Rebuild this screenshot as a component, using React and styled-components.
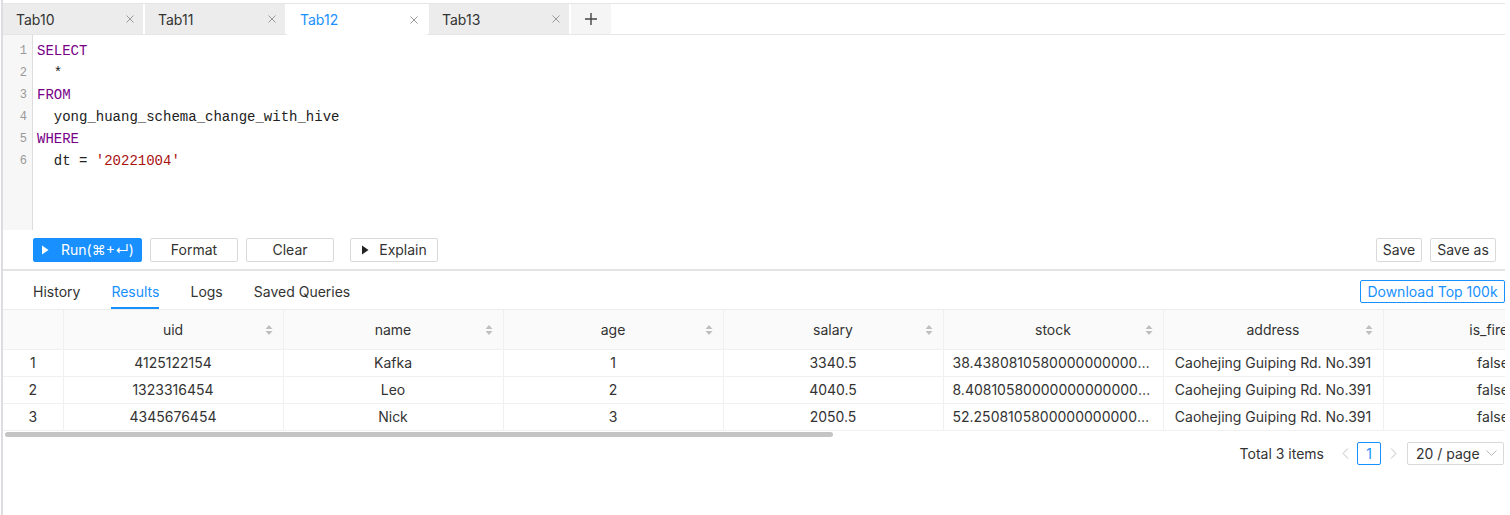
import React from "react";
import styled, { createGlobalStyle } from "styled-components";

const Global = createGlobalStyle`
  html, body { margin: 0; padding: 0; background: #fff; }
  body { font-family: Inter, "Noto Sans", sans-serif; font-size: 14px; color: #333; }
  * { box-sizing: border-box; }
`;

const Page = styled.div`
  width: 1510px;
  height: 515px;
  padding-left: 1px;
  overflow: hidden;
  display: flex;
`;

const Shell = styled.div`
  flex: 0 0 1504px;
  border-left: 2px solid #dcdce3;
  display: flex;
  flex-direction: column;
  padding-top: 3px;
`;

const TabBar = styled.div`
  height: 32px;
  display: flex;
  gap: 2px;
  border-top: 1px solid #e6e6e6;
  border-bottom: 1px solid #e6e6e6;
  width: 1502px;
`;

const Tab = styled.div`
  width: 140px;
  display: flex;
  align-items: center;
  justify-content: space-between;
  padding: 0 9px 0 13px;
  background: ${(p) => (p.$active ? "#fff" : "#ececec")};
  color: ${(p) => (p.$active ? "#1890ff" : "#333")};
  font-size: 14px;
  margin-bottom: ${(p) => (p.$active ? "-1px" : "0")};
`;

const AddTab = styled.div`
  width: 40px;
  display: flex;
  align-items: center;
  justify-content: center;
  background: #f5f5f5;
  color: #444;
`;

const Editor = styled.div`
  height: 195px;
  display: flex;
  width: 1502px;
`;

const Gutter = styled.div`
  width: 30px;
  background: #f7f7f7;
  border-right: 1px solid #ddd;
  padding-top: 5px;
  display: flex;
  flex-direction: column;
`;

const LineNo = styled.div`
  height: 22px;
  line-height: 22px;
  text-align: right;
  padding-right: 5px;
  font-family: "Liberation Mono", monospace;
  font-size: 12px;
  color: #999;
`;

const Code = styled.div`
  padding: 5px 0 0 4px;
  font-family: "Liberation Mono", "DejaVu Sans Mono", monospace;
  font-size: 14px;
`;

const CodeLine = styled.div`
  height: 22px;
  line-height: 22px;
  white-space: pre;
  color: #222;
`;

const Kw = styled.span`
  color: #770088;
`;

const Str = styled.span`
  color: #aa1111;
`;

const Toolbar = styled.div`
  height: 41px;
  display: flex;
  align-items: center;
  padding: 0 9px 0 30px;
  width: 1502px;
  border-bottom: 2px solid #e4e4e4;
`;

const Btn = styled.button`
  height: 24px;
  width: ${(p) => p.$w}px;
  margin-left: ${(p) => p.$ml || 0}px;
  display: inline-flex;
  align-items: center;
  justify-content: center;
  gap: ${(p) => (p.$primary ? 12 : 10)}px;
  border: 1px solid ${(p) => (p.$primary ? "#1890ff" : "#d9d9d9")};
  background: ${(p) => (p.$primary ? "#1890ff" : "#fff")};
  color: ${(p) => (p.$primary ? "#fff" : "#333")};
  border-radius: 2px;
  font-family: Inter, sans-serif;
  font-size: 14px;
  padding: 0;
  cursor: pointer;
`;

const Spacer = styled.div`
  flex: 1;
`;

const ResultTabs = styled.div`
  height: 39px;
  display: flex;
  align-items: stretch;
  padding: 0 0 0 30px;
  gap: 31px;
  border-bottom: 1px solid #ececec;
  width: 1502px;
`;

const RTab = styled.div`
  display: flex;
  align-items: center;
  padding-top: 5px;
  font-size: 14px;
  color: ${(p) => (p.$active ? "#1890ff" : "#333")};
  border-bottom: 2px solid ${(p) => (p.$active ? "#1890ff" : "transparent")};
`;

const DownloadBtn = styled.button`
  align-self: center;
  margin-top: 3px;
  margin-left: auto;
  height: 23px;
  width: 145px;
  border: 1px solid #1890ff;
  background: #fff;
  color: #1890ff;
  border-radius: 2px;
  font-family: Inter, sans-serif;
  font-size: 14px;
  padding: 0;
`;

const TableWrap = styled.div`
  width: 1502px;
  overflow: hidden;
`;

const Table = styled.table`
  border-collapse: collapse;
  table-layout: fixed;
  width: 1600px;
`;

const Th = styled.th`
  height: 39px;
  background: #fafafa;
  font-weight: 400;
  color: #333;
  border-right: 1px solid #f0f0f0;
  border-bottom: 1px solid #f0f0f0;
  position: relative;
  font-size: 14px;
  padding: 0;
`;

const Td = styled.td`
  height: 27px;
  border-right: 1px solid #f0f0f0;
  border-bottom: 1px solid #f0f0f0;
  text-align: ${(p) => p.$align || "center"};
  padding: 0 ${(p) => (p.$align === "left" ? "9px" : "8px")};
  font-size: 14px;
  color: #333;
  white-space: nowrap;
  overflow: hidden;
  text-overflow: ellipsis;
`;

const SortIcon = styled.svg`
  position: absolute;
  right: 10px;
  top: 14px;
`;

const Scroll = styled.div`
  height: 8px;
  padding: 1px 0 0 2px;
`;

const Thumb = styled.div`
  width: 828px;
  height: 5px;
  border-radius: 3px;
  background: #c4c4c4;
`;

const Pager = styled.div`
  display: flex;
  align-items: center;
  justify-content: flex-end;
  width: 1502px;
  padding: 0 1px 0 0;
  margin-top: 3px;
  height: 23px;
  font-size: 14px;
`;

const Total = styled.span`
  margin-right: 9px;
  color: #333;
`;

const Arrow = styled.span`
  width: 24px;
  display: flex;
  align-items: center;
  justify-content: center;
`;

const PageNo = styled.div`
  width: 24px;
  height: 23px;
  border: 1px solid #1890ff;
  border-radius: 2px;
  color: #1890ff;
  display: flex;
  align-items: center;
  justify-content: center;
`;

const Select = styled.div`
  margin-left: 2px;
  width: 97px;
  height: 23px;
  border: 1px solid #d9d9d9;
  border-radius: 2px;
  display: flex;
  align-items: center;
  justify-content: space-between;
  padding: 0 6px 0 8px;
  color: #333;
`;

const Play = ({ color }) => (
  <svg width="8" height="10" viewBox="0 0 8 10">
    <path d="M1 0.5 L7.5 5 L1 9.5 Z" fill={color} />
  </svg>
);

const CloseX = () => (
  <svg width="8" height="8" viewBox="0 0 8 8">
    <path d="M0.5 0.5 L7.5 7.5 M7.5 0.5 L0.5 7.5" stroke="#999" strokeWidth="1" />
  </svg>
);

const Chevron = ({ dir }) => (
  <svg width="7" height="11" viewBox="0 0 7 11">
    <path
      d={dir === "left" ? "M6 0.5 L1 5.5 L6 10.5" : "M1 0.5 L6 5.5 L1 10.5"}
      stroke="#c0c0c0"
      fill="none"
    />
  </svg>
);

const Sort = () => (
  <SortIcon width="8" height="12" viewBox="0 0 8 12">
    <path d="M4 1 L7.5 5 L0.5 5 Z" fill="#bfbfbf" />
    <path d="M4 11 L7.5 7 L0.5 7 Z" fill="#bfbfbf" />
  </SortIcon>
);

const columns = ["", "uid", "name", "age", "salary", "stock", "address", "is_fired"];
const rows = [
  ["1", "4125122154", "Kafka", "1", "3340.5", "38.43808105800000000000001", "Caohejing Guiping Rd. No.391", "false"],
  ["2", "1323316454", "Leo", "2", "4040.5", "8.408105800000000000000001", "Caohejing Guiping Rd. No.391", "false"],
  ["3", "4345676454", "Nick", "3", "2050.5", "52.25081058000000000000001", "Caohejing Guiping Rd. No.391", "false"],
];

export default function App() {
  return (
    <>
      <Global />
      <Page>
        <Shell>
          <TabBar>
            {["Tab10", "Tab11", "Tab12", "Tab13"].map((t) => (
              <Tab key={t} $active={t === "Tab12"}>
                <span>{t}</span>
                <CloseX />
              </Tab>
            ))}
            <AddTab>
              <svg width="14" height="14" viewBox="0 0 14 14">
                <path d="M7 1 V13 M1 7 H13" stroke="#444" strokeWidth="1.4" />
              </svg>
            </AddTab>
          </TabBar>
          <Editor>
            <Gutter>
              {[1, 2, 3, 4, 5, 6].map((n) => (
                <LineNo key={n}>{n}</LineNo>
              ))}
            </Gutter>
            <Code>
              <CodeLine><Kw>SELECT</Kw></CodeLine>
              <CodeLine>{"  *"}</CodeLine>
              <CodeLine><Kw>FROM</Kw></CodeLine>
              <CodeLine>{"  yong_huang_schema_change_with_hive"}</CodeLine>
              <CodeLine><Kw>WHERE</Kw></CodeLine>
              <CodeLine>{"  dt = "}<Str>'20221004'</Str></CodeLine>
            </Code>
          </Editor>
          <Toolbar>
            <Btn $primary $w={109}><Play color="#fff" />Run(⌘+↵)</Btn>
            <Btn $w={88} $ml={8}>Format</Btn>
            <Btn $w={88} $ml={8}>Clear</Btn>
            <Btn $w={88} $ml={16}><Play color="#222" />Explain</Btn>
            <Spacer />
            <Btn $w={46}>Save</Btn>
            <Btn $w={66} $ml={8}>Save as</Btn>
          </Toolbar>
          <ResultTabs>
            <RTab>History</RTab>
            <RTab $active>Results</RTab>
            <RTab>Logs</RTab>
            <RTab>Saved Queries</RTab>
            <DownloadBtn>Download Top 100k</DownloadBtn>
          </ResultTabs>
          <TableWrap>
            <Table>
              <colgroup>
                <col style={{ width: 60 }} />
                {columns.slice(1).map((c) => (
                  <col key={c} style={{ width: 220 }} />
                ))}
              </colgroup>
              <thead>
                <tr>
                  {columns.map((c, i) => (
                    <Th key={i}>
                      {c}
                      {i > 0 && <Sort />}
                    </Th>
                  ))}
                </tr>
              </thead>
              <tbody>
                {rows.map((r) => (
                  <tr key={r[0]}>
                    {r.map((v, i) => (
                      <Td key={i} $align={i === 5 ? "left" : "center"}>{v}</Td>
                    ))}
                  </tr>
                ))}
              </tbody>
            </Table>
          </TableWrap>
          <Scroll>
            <Thumb />
          </Scroll>
          <Pager>
            <Total>Total 3 items</Total>
            <Arrow><Chevron dir="left" /></Arrow>
            <PageNo>1</PageNo>
            <Arrow><Chevron dir="right" /></Arrow>
            <Select>
              <span>20 / page</span>
              <svg width="11" height="7" viewBox="0 0 11 7">
                <path d="M0.5 0.5 L5.5 5.5 L10.5 0.5" stroke="#bbb" fill="none" />
              </svg>
            </Select>
          </Pager>
        </Shell>
      </Page>
    </>
  );
}
